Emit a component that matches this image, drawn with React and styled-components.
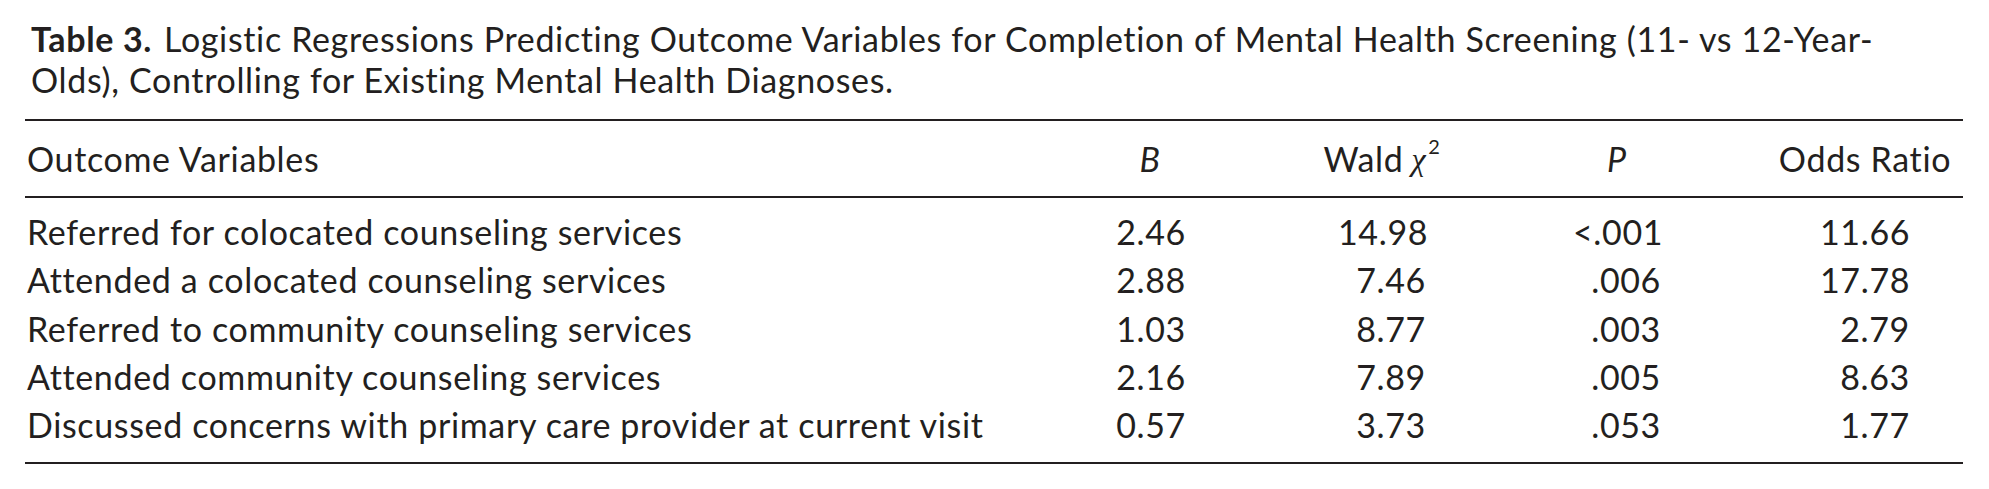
import styled, { createGlobalStyle } from 'styled-components';

const GlobalStyle = createGlobalStyle`
  html, body {
    margin: 0;
    padding: 0;
    background: #ffffff;
  }
  body {
    font-family: 'Lato', 'Open Sans', sans-serif;
    color: #231f20;
  }
`;

const Page = styled.div`
  box-sizing: border-box;
  width: 1989px;
  height: 489px;
  padding: 18px 26px 0 25px;
  background: #ffffff;
`;

const Caption = styled.div`
  font-size: 34px;
  line-height: 41px;
  letter-spacing: 0.65px;
  padding-left: 6px;
  margin-bottom: 19px;
  white-space: nowrap;

  strong {
    font-weight: 700;
    margin-right: 12px;
  }
`;

const Table = styled.div`
  display: grid;
  grid-template-columns: 1015px 220px 244px 226px 1fr;
  border-top: 2px solid #231f20;
  border-bottom: 2px solid #231f20;
  font-size: 34px;
  letter-spacing: 0.65px;
`;

const HeadRow = styled.div`
  display: contents;

  & > div {
    line-height: 48px;
    padding-top: 14px;
    padding-bottom: 13px;
    border-bottom: 2px solid #231f20;
  }
`;

const BodyRow = styled.div`
  display: contents;

  & > div {
    line-height: 48.25px;
    padding-top: ${(p) => (p.$first ? 10 : 0)}px;
    padding-bottom: ${(p) => (p.$last ? 13 : 0)}px;
  }
`;

const LabelCell = styled.div`
  padding-left: 2px;
  white-space: nowrap;
`;

const Cell = styled.div`
  display: flex;
  justify-content: center;
  padding-left: ${(p) => p.$shift || 0}px;
  white-space: nowrap;
`;

const NumBox = styled.span`
  display: inline-block;
  width: ${(p) => p.$w}px;
  text-align: right;
`;

const Stat = styled.span`
  font-style: italic;
`;

const Chi = styled.span`
  font-family: 'Liberation Serif', 'DejaVu Serif', serif;
  font-style: italic;
  margin-left: 8px;
  font-size: 32px;

  sup {
    font-family: 'Lato', sans-serif;
    font-style: normal;
    font-size: 20px;
    vertical-align: 16px;
    line-height: 0;
    margin-left: 2px;
  }
`;

const columns = [
  { key: 'b', w: 72, shift: 0 },
  { key: 'wald', w: 88, shift: 0 },
  { key: 'p', w: 88, shift: 0 },
  { key: 'or', w: 90, shift: 37 },
];

const rows = [
  ['Referred for colocated counseling services', '2.46', '14.98', '<.001', '11.66'],
  ['Attended a colocated counseling services', '2.88', '7.46', '.006', '17.78'],
  ['Referred to community counseling services', '1.03', '8.77', '.003', '2.79'],
  ['Attended community counseling services', '2.16', '7.89', '.005', '8.63'],
  ['Discussed concerns with primary care provider at current visit', '0.57', '3.73', '.053', '1.77'],
];

function App() {
  return (
    <>
      <GlobalStyle />
      <Page>
        <Caption>
          <strong>Table 3.</strong>
          Logistic Regressions Predicting Outcome Variables for Completion of Mental Health Screening (11- vs 12-Year-
          <br />
          Olds), Controlling for Existing Mental Health Diagnoses.
        </Caption>
        <Table>
          <HeadRow>
            <LabelCell>Outcome Variables</LabelCell>
            <Cell>
              <Stat>B</Stat>
            </Cell>
            <Cell>
              Wald
              <Chi>
                χ<sup>2</sup>
              </Chi>
            </Cell>
            <Cell>
              <Stat>P</Stat>
            </Cell>
            <Cell $shift={37}>Odds Ratio</Cell>
          </HeadRow>
          {rows.map(([label, ...nums], r) => (
            <BodyRow key={label} $first={r === 0} $last={r === rows.length - 1}>
              <LabelCell>{label}</LabelCell>
              {nums.map((n, i) => (
                <Cell key={columns[i].key} $shift={columns[i].shift}>
                  <NumBox $w={columns[i].w}>{n}</NumBox>
                </Cell>
              ))}
            </BodyRow>
          ))}
        </Table>
      </Page>
    </>
  );
}

export default App;
